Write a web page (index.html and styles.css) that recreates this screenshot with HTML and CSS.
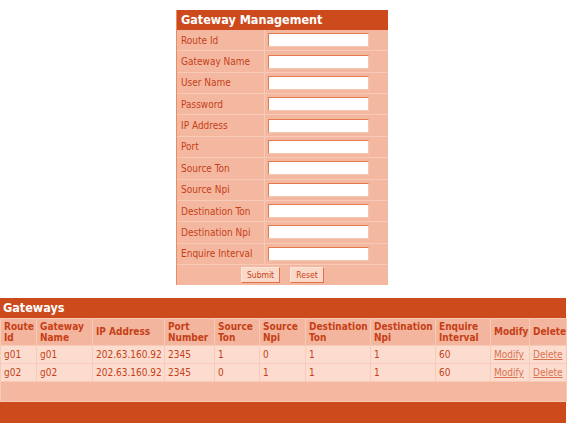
FILE: index.html
```html
<!DOCTYPE html>
<html>
<head>
<meta charset="utf-8">
<link rel="stylesheet" href="styles.css">
</head>
<body>
<div class="page">
  <form class="panel">
    <div class="panel-title">Gateway Management</div>
    <div class="frow"><label class="flabel">Route Id</label><div class="fcell"><input class="finput" type="text"></div></div>
    <div class="frow"><label class="flabel">Gateway Name</label><div class="fcell"><input class="finput" type="text"></div></div>
    <div class="frow"><label class="flabel">User Name</label><div class="fcell"><input class="finput" type="text"></div></div>
    <div class="frow"><label class="flabel">Password</label><div class="fcell"><input class="finput" type="text"></div></div>
    <div class="frow"><label class="flabel">IP Address</label><div class="fcell"><input class="finput" type="text"></div></div>
    <div class="frow"><label class="flabel">Port</label><div class="fcell"><input class="finput" type="text"></div></div>
    <div class="frow"><label class="flabel">Source Ton</label><div class="fcell"><input class="finput" type="text"></div></div>
    <div class="frow"><label class="flabel">Source Npi</label><div class="fcell"><input class="finput" type="text"></div></div>
    <div class="frow"><label class="flabel">Destination Ton</label><div class="fcell"><input class="finput" type="text"></div></div>
    <div class="frow"><label class="flabel">Destination Npi</label><div class="fcell"><input class="finput" type="text"></div></div>
    <div class="frow"><label class="flabel">Enquire Interval</label><div class="fcell"><input class="finput" type="text"></div></div>
    <div class="factions">
      <button type="button" class="btn btn-submit">Submit</button>
      <button type="button" class="btn btn-reset">Reset</button>
    </div>
  </form>

  <div class="grid-wrap">
    <div class="grid-title">Gateways</div>
    <table class="grid">
      <colgroup>
        <col style="width:36px"><col style="width:56px"><col style="width:72px"><col style="width:50px"><col style="width:45px"><col style="width:46px"><col style="width:65px"><col style="width:65px"><col style="width:55px"><col style="width:39px"><col style="width:37px">
      </colgroup>
      <thead>
        <tr>
          <th>Route<br>Id</th><th>Gateway<br>Name</th><th>IP Address</th><th>Port<br>Number</th><th>Source<br>Ton</th><th>Source<br>Npi</th><th>Destination<br>Ton</th><th>Destination<br>Npi</th><th>Enquire<br>Interval</th><th>Modify</th><th>Delete</th>
        </tr>
      </thead>
      <tbody>
        <tr><td>g01</td><td>g01</td><td>202.63.160.92</td><td>2345</td><td>1</td><td>0</td><td>1</td><td>1</td><td>60</td><td><a href="#">Modify</a></td><td><a href="#">Delete</a></td></tr>
        <tr><td>g02</td><td>g02</td><td>202.63.160.92</td><td>2345</td><td>0</td><td>1</td><td>1</td><td>1</td><td>60</td><td><a href="#">Modify</a></td><td><a href="#">Delete</a></td></tr>
        <tr class="empty"><td colspan="11"></td></tr>
      </tbody>
    </table>
    <div class="grid-foot"></div>
  </div>
</div>
</body>
</html>
```

FILE: styles.css
```css
html, body {
  margin: 0;
  padding: 0;
  background: #ffffff;
}
body {
  font-family: "DejaVu Sans Condensed", "DejaVu Sans", sans-serif;
  font-size: 10px;
  color: #c63f17;
}
.page {
  width: 566px;
  padding-top: 10px;
}
.panel {
  width: 212px;
  margin: 0 0 0 176px;
  background: #f4b8a1;
  border-left: 1px solid #ea8c66;
  box-sizing: border-box;
}
.panel-title {
  height: 20px;
  line-height: 20px;
  background: #cd4a1d;
  color: #ffffff;
  font-weight: bold;
  font-size: 12.5px;
  padding-left: 4px;
}
.frow {
  display: flex;
  height: 21.36px;
  box-sizing: border-box;
  border-bottom: 1px solid #f8cbb8;
}
.flabel {
  width: 88px;
  box-sizing: border-box;
  padding-left: 4px;
  display: flex;
  align-items: center;
  border-right: 1px solid #f8cbb8;
}
.fcell {
  flex: 1;
  display: flex;
  align-items: center;
  padding-left: 3px;
}
.finput {
  width: 101px;
  height: 14px;
  box-sizing: border-box;
  margin: 0;
  padding: 0;
  background: #ffffff;
  border: 1px solid #f5c7b3;
  border-top-color: #e5794f;
  border-left-color: #e5794f;
}
.factions {
  height: 20px;
  display: flex;
  align-items: center;
  justify-content: center;
  gap: 10px;
}
.btn {
  height: 16px;
  margin: 0;
  padding: 0;
  font-family: "DejaVu Sans Condensed", "DejaVu Sans", sans-serif;
  font-size: 8.5px;
  color: #c63f17;
  background: #fbd9c9;
  border: 1px solid #e07148;
  border-top-color: #fbe6dc;
  border-left-color: #fbe6dc;
}
.btn-submit { width: 39px; }
.btn-reset { width: 34px; }

.grid-wrap {
  margin-top: 13px;
  width: 566px;
}
.grid-title {
  height: 20px;
  line-height: 20px;
  background: #cd4a1d;
  color: #ffffff;
  font-weight: bold;
  font-size: 12.5px;
  padding-left: 3px;
}
.grid {
  width: 566px;
  border-collapse: collapse;
  table-layout: fixed;
  background: #f4b8a1;
}
.grid th, .grid td {
  padding: 0 0 0 3px;
  text-align: left;
  vertical-align: middle;
  border: 1px solid #f8cbb8;
  overflow: hidden;
  white-space: nowrap;
}
.grid th {
  height: 26px;
  font-weight: bold;
  line-height: 11px;
  background: #f3b59d;
}
.grid td {
  height: 17px;
  background: #fbdccf;
}
.grid tr.empty td {
  height: 19px;
  background: #f4b8a1;
}
.grid a {
  color: #d8724f;
  text-decoration: underline;
}
.grid-foot {
  height: 21px;
  background: #cd4a1d;
}
```
